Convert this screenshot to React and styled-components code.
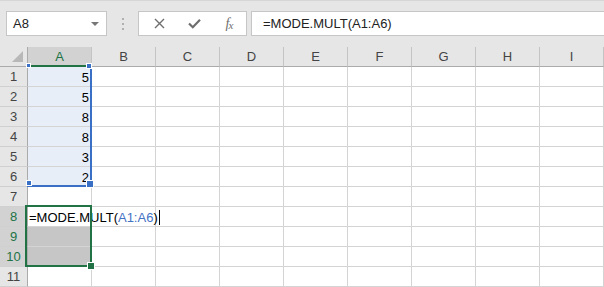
import React from 'react';
import styled, { createGlobalStyle } from 'styled-components';

const GlobalStyle = createGlobalStyle`
  html, body {
    margin: 0;
    padding: 0;
    background: #ffffff;
  }
  body {
    font-family: "Liberation Sans", Arial, sans-serif;
    width: 604px;
    height: 287px;
    overflow: hidden;
  }
`;

const GRID = '#d4d4d4';
const HEAD_BG = '#e6e6e6';
const HEAD_ACTIVE = '#d2d2d2';
const GREEN = '#217346';
const BLUE = '#3a6fc6';

const Page = styled.div`
  width: 604px;
  height: 287px;
  background: ${HEAD_BG};
  display: flex;
  flex-direction: column;
  overflow: hidden;
`;

const TopBar = styled.div`
  height: 47px;
  box-sizing: border-box;
  border-top: 1px solid #d6d6d6;
  padding: 10px 0 0 6px;
  display: flex;
  align-items: flex-start;
`;

const NameBox = styled.div`
  width: 101px;
  height: 25px;
  box-sizing: border-box;
  background: #fff;
  border: 1px solid #c6c6c6;
  display: flex;
  align-items: center;
  justify-content: space-between;
  padding: 0 7px 0 6px;
  font-size: 13px;
  color: #222;
`;

const DropArrow = styled.span`
  width: 0;
  height: 0;
  border-left: 4px solid transparent;
  border-right: 4px solid transparent;
  border-top: 4px solid #777;
`;

const Dots = styled.div`
  width: 31px;
  height: 25px;
  display: flex;
  flex-direction: column;
  align-items: center;
  justify-content: center;
  gap: 3px;

  span {
    width: 2px;
    height: 2px;
    background: #b0b0b0;
  }
`;

const FuncBox = styled.div`
  width: 109px;
  height: 25px;
  box-sizing: border-box;
  background: #fff;
  border: 1px solid #c6c6c6;
  display: flex;
  align-items: center;
  padding-left: 8px;
  gap: 11px;
  margin-right: 4px;
`;

const IconBtn = styled.div`
  width: 24px;
  height: 23px;
  display: flex;
  align-items: center;
  justify-content: center;
  color: #6e6e6e;
`;

const Fx = styled.span`
  font-family: "Liberation Serif", "Times New Roman", serif;
  font-style: italic;
  font-size: 14px;
  color: #6e6e6e;
  letter-spacing: -1px;

  small {
    font-size: 11px;
    position: relative;
    top: 1px;
  }
`;

const FormulaBox = styled.div`
  flex: 1;
  height: 25px;
  box-sizing: border-box;
  background: #fff;
  border: 1px solid #c6c6c6;
  border-right: none;
  padding-left: 11px;
  display: flex;
  align-items: center;
  font-size: 13px;
  color: #222;
`;

const Sheet = styled.div`
  position: relative;
  display: grid;
  grid-template-columns: 28px repeat(9, 64px);
  grid-template-rows: repeat(12, 20px);
  background: #fff;
`;

const Corner = styled.div`
  background: ${HEAD_BG};
  border-right: 1px solid #ababab;
  border-bottom: 1px solid #ababab;
  box-sizing: border-box;
  display: flex;
  align-items: flex-end;
  justify-content: flex-end;
  padding: 0 4px 4px 0;

  &::after {
    content: '';
    width: 0;
    height: 0;
    border-left: 11px solid transparent;
    border-bottom: 11px solid #b8b8b8;
  }
`;

const ColHead = styled.div`
  background: ${p => (p.$active ? HEAD_ACTIVE : HEAD_BG)};
  border-right: 1px solid #c4c4c4;
  border-bottom: ${p => (p.$active ? `2px solid ${GREEN}` : '1px solid #ababab')};
  box-sizing: border-box;
  display: flex;
  align-items: center;
  justify-content: center;
  font-size: 13px;
  color: ${p => (p.$active ? GREEN : '#444')};
`;

const RowHead = styled.div`
  background: ${p => (p.$active ? HEAD_ACTIVE : HEAD_BG)};
  border-right: 1px solid #ababab;
  border-bottom: 1px solid #d0d0d0;
  box-sizing: border-box;
  display: flex;
  align-items: center;
  justify-content: center;
  font-size: 13px;
  color: ${p => (p.$active ? GREEN : '#444')};
`;

const Cell = styled.div`
  background: ${p => p.$fill || 'transparent'};
  border-right: 1px solid ${GRID};
  border-bottom: 1px solid ${GRID};
  box-sizing: border-box;
  display: flex;
  align-items: center;
  justify-content: ${p => (p.$num ? 'flex-end' : 'flex-start')};
  padding: ${p => (p.$num ? '1px 2px 0 0' : '2px 0 0 1px')};
  font-size: 13px;
  color: #000;
  white-space: nowrap;
  overflow: visible;
`;

const EditText = styled.span`
  position: relative;
  z-index: 2;
  display: flex;
  align-items: center;

  em {
    font-style: normal;
    color: #4472c4;
  }
`;

const Caret = styled.i`
  display: inline-block;
  width: 1px;
  height: 15px;
  background: #000;
  margin-left: 1px;
`;

const RefRange = styled.div`
  position: absolute;
  left: 27px;
  top: 19px;
  width: 65px;
  height: 121px;
  box-sizing: border-box;
  border-right: 2px solid ${BLUE};
  border-bottom: 2px solid ${BLUE};
  pointer-events: none;
  z-index: 3;
`;

const Handle = styled.span`
  position: absolute;
  width: ${p => p.$size || 5}px;
  height: ${p => p.$size || 5}px;
  background: ${p => p.$color};
  outline: 1px solid #fff;
  left: ${p => p.$x}px;
  top: ${p => p.$y}px;
`;

const Selection = styled.div`
  position: absolute;
  left: 25px;
  top: 158px;
  width: 67px;
  height: 62px;
  box-sizing: border-box;
  border: 2px solid ${GREEN};
  pointer-events: none;
  z-index: 3;
`;

const columns = ['A', 'B', 'C', 'D', 'E', 'F', 'G', 'H', 'I'];
const values = [5, 5, 8, 8, 3, 2];

function cellFill(row, col) {
  if (col !== 0) return null;
  if (row >= 1 && row <= 6) return '#e8eef8';
  if (row === 9 || row === 10) return '#c6c6c6';
  return null;
}

function CellContent({ row, col }) {
  if (col === 0 && row >= 1 && row <= 6) return values[row - 1];
  if (col === 0 && row === 8) {
    return (
      <EditText>
        =MODE.MULT(<em>A1:A6</em>)<Caret />
      </EditText>
    );
  }
  return null;
}

export default function App() {
  const rows = Array.from({ length: 11 }, (_, i) => i + 1);

  return (
    <>
      <GlobalStyle />
      <Page>
        <TopBar>
          <NameBox>
            A8
            <DropArrow />
          </NameBox>
          <Dots>
            <span />
            <span />
            <span />
          </Dots>
          <FuncBox>
            <IconBtn>
              <svg width="11" height="11" viewBox="0 0 11 11">
                <path d="M1 1 L10 10 M10 1 L1 10" stroke="currentColor" strokeWidth="1.4" fill="none" />
              </svg>
            </IconBtn>
            <IconBtn>
              <svg width="13" height="11" viewBox="0 0 13 11">
                <path d="M1 5.5 L4.8 9.3 L12 1.8" stroke="currentColor" strokeWidth="2.2" fill="none" />
              </svg>
            </IconBtn>
            <IconBtn>
              <Fx>
                f<small>x</small>
              </Fx>
            </IconBtn>
          </FuncBox>
          <FormulaBox>=MODE.MULT(A1:A6)</FormulaBox>
        </TopBar>

        <Sheet>
          <Corner />
          {columns.map(c => (
            <ColHead key={c} $active={c === 'A'}>
              {c}
            </ColHead>
          ))}
          {rows.map(r => (
            <React.Fragment key={r}>
              <RowHead $active={r >= 8 && r <= 10}>{r}</RowHead>
              {columns.map((c, ci) => (
                <Cell key={c} $fill={cellFill(r, ci)} $num={ci === 0 && r <= 6}>
                  <CellContent row={r} col={ci} />
                </Cell>
              ))}
            </React.Fragment>
          ))}

          <RefRange>
            <Handle $color={BLUE} $x={60} $y={-2} $size={4} />
            <Handle $color={BLUE} $x={0} $y={-2} $size={3} />
            <Handle $color={BLUE} $x={0} $y={115} $size={4} />
            <Handle $color={BLUE} $x={60} $y={115} $size={6} />
          </RefRange>
          <Selection>
            <Handle $color={GREEN} $x={61} $y={56} $size={6} />
          </Selection>
        </Sheet>
      </Page>
    </>
  );
}
